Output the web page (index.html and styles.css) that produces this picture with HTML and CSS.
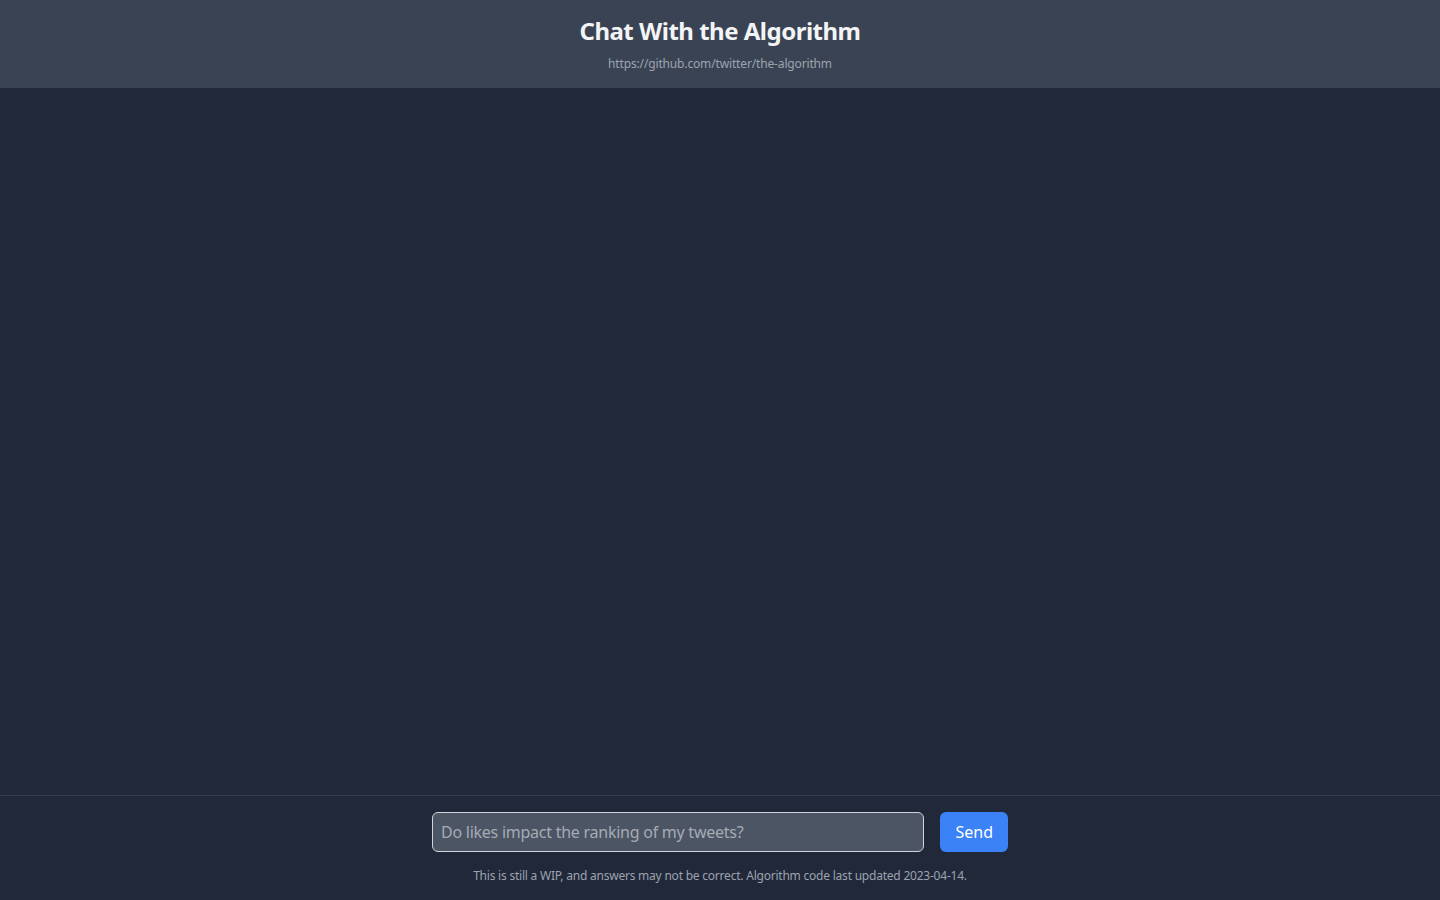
FILE: index.html
```html
<!DOCTYPE html>
<html lang="en">
<head>
    <meta charset="UTF-8">
    <meta name="viewport" content="width=device-width, initial-scale=1.0">
    <title>Chat With the Algorithm</title>
    <link rel="stylesheet" href="styles.css">
</head>
<body>
    <div class="app">
        <header class="header">
            <h1 class="title">Chat With the Algorithm</h1>
            <a class="repo-link" href="#">https://github.com/twitter/the-algorithm</a>
        </header>

        <main class="messages" id="messages"></main>

        <footer class="footer">
            <form class="chat-form" onsubmit="return false;">
                <input class="chat-input" type="text" placeholder="Do likes impact the ranking of my tweets?">
                <button class="send-button" type="submit">Send</button>
            </form>
            <p class="disclaimer">This is still a WIP, and answers may not be correct. Algorithm code last updated 2023-04-14.</p>
        </footer>
    </div>
</body>
</html>
```

FILE: styles.css
```css
* {
    box-sizing: border-box;
}
body {
    margin: 0;
    font-family: "Noto Sans", "Open Sans", sans-serif;
    background-color: #21283a;
    color: #fff;
}
.app {
    display: flex;
    flex-direction: column;
    height: 100vh;
}
.header {
    background-color: #3a4354;
    padding: 15px 0 16px;
    text-align: center;
}
.title {
    margin: 0;
    font-size: 24px;
    line-height: 32px;
    font-weight: 700;
    letter-spacing: -0.5px;
    color: #f3f4f6;
}
.repo-link {
    display: block;
    font-size: 12px;
    line-height: 16px;
    margin-top: 9px;
    letter-spacing: -0.15px;
    color: #9ca3af;
    text-decoration: none;
}
.messages {
    flex: 1;
    overflow-y: auto;
}
.footer {
    border-top: 1px solid #343d4e;
    padding: 16px 0 16px;
}
.chat-form {
    display: flex;
    gap: 16px;
    width: 576px;
    margin: 0 auto;
}
.chat-input {
    flex: 1;
    height: 40px;
    padding: 0 8px;
    font-family: inherit;
    font-size: 16px;
    letter-spacing: -0.25px;
    color: #f3f4f6;
    background-color: #4b5563;
    border: 1px solid #d1d5db;
    border-radius: 6px;
    outline: none;
}
.chat-input::placeholder {
    color: #a5abb5;
}
.send-button {
    height: 40px;
    padding: 0 15px;
    font-family: inherit;
    font-size: 16px;
    color: #fff;
    background-color: #3b82f6;
    border: none;
    border-radius: 6px;
    cursor: pointer;
}
.send-button:hover {
    background-color: #2563eb;
}
.disclaimer {
    margin: 16px 0 0;
    font-size: 12px;
    line-height: 16px;
    letter-spacing: -0.22px;
    text-align: center;
    color: #9ca3af;
}
```
